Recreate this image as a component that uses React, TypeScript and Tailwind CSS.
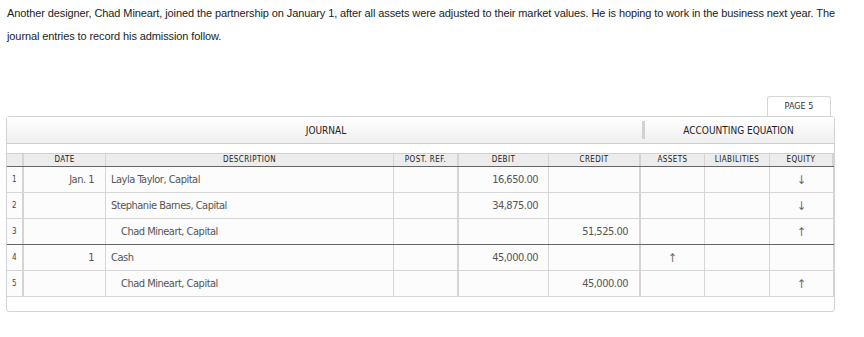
import React from "react";

const dataFont = { fontFamily: '"DejaVu Sans Condensed", "DejaVu Sans", sans-serif' };

type Row = {
  n: number;
  date: string;
  desc: string;
  indent?: boolean;
  debit?: string;
  credit?: string;
  assets?: string;
  liab?: string;
  equity?: string;
  dark?: boolean;
};

const rows: Row[] = [
  { n: 1, date: "Jan. 1", desc: "Layla Taylor, Capital", debit: "16,650.00", equity: "↓" },
  { n: 2, date: "", desc: "Stephanie Barnes, Capital", debit: "34,875.00", equity: "↓" },
  { n: 3, date: "", desc: "Chad Mineart, Capital", indent: true, credit: "51,525.00", equity: "↑", dark: true },
  { n: 4, date: "1", desc: "Cash", debit: "45,000.00", assets: "↑" },
  { n: 5, date: "", desc: "Chad Mineart, Capital", indent: true, credit: "45,000.00", equity: "↑" },
];

function HeadCell({ w, children, thick, last }: { w: string; children?: React.ReactNode; thick?: boolean; last?: boolean }) {
  return (
    <div
      className={`${w} shrink-0 flex items-center justify-center ${last ? "" : thick ? "border-r-2 border-[#d4d4d4]" : "border-r border-[#d4d4d4]"}`}
    >
      {children}
    </div>
  );
}

export default function App() {
  return (
    <div className="bg-white w-[864px] h-[337px] overflow-hidden pl-[6px] pt-[2px]">
      <p
        className="w-[842px] text-[11px] leading-[23px] text-[#222] pl-[1px] tracking-[-0.1px]"
        style={{ fontFamily: '"Liberation Sans", Arial, sans-serif' }}
      >
        Another designer, Chad Mineart, joined the partnership on January 1, after all assets were adjusted to their market values. He is hoping to work in the business next year. The journal entries to record his admission follow.
      </p>

      <div className="w-[829px] mt-[48px]" style={{ fontFamily: '"DejaVu Sans Condensed", "DejaVu Sans", sans-serif' }}>
        <div className="flex justify-end pr-[4px]">
          <div className="w-[64px] h-[20px] border border-b-0 border-[#d6d6d6] rounded-t-[3px] bg-white flex items-center justify-center text-[9px] text-[#333]">
            PAGE 5
          </div>
        </div>

        <div className="border border-[#d3d3d3] rounded-[3px] bg-white">
          {/* Header band */}
          <div className="h-[27px] flex bg-gradient-to-b from-white to-[#efefef] border-b border-[#cfcfcf] text-[10px] text-[#222]">
            <div className="w-[635px] flex items-center justify-center pl-[3px]">JOURNAL</div>
            <div className="w-[3px] my-[4px] bg-[#d2d2d2]" />
            <div className="flex-1 flex items-center justify-center pr-[2px]">ACCOUNTING EQUATION</div>
          </div>

          <div className="h-[9px]" />

          {/* Column header row */}
          <div className="h-[14px] flex border-t border-[#d0d0d0] border-b border-b-[#666] bg-[#ececec] text-[8px] tracking-[0.4px] text-[#222]">
            <HeadCell w="w-[17px]" thick />
            <HeadCell w="w-[82px]">DATE</HeadCell>
            <HeadCell w="w-[288px]">DESCRIPTION</HeadCell>
            <HeadCell w="w-[65px]" thick>POST. REF.</HeadCell>
            <HeadCell w="w-[90px]">DEBIT</HeadCell>
            <HeadCell w="w-[92px]" thick>CREDIT</HeadCell>
            <HeadCell w="w-[64px]">ASSETS</HeadCell>
            <HeadCell w="w-[65px]">LIABILITIES</HeadCell>
            <HeadCell w="w-[63px]">EQUITY</HeadCell>
            <div className="w-[2px] bg-[#d4d4d4]" />
          </div>

          {rows.map((r) => (
            <div
              key={r.n}
              className={`h-[26px] flex bg-[#fcfcfc] border-b ${r.dark ? "border-[#666]" : "border-[#d6d6d6]"} text-[11px] tracking-[-0.5px] text-[#555]`}
              style={dataFont}
            >
              <div className="w-[17px] shrink-0 border-r-2 border-[#d4d4d4] flex items-center pl-[5px] text-[8px] tracking-normal text-[#444]">
                {r.n}
              </div>
              <div className="w-[82px] shrink-0 border-r border-[#d6d6d6] flex items-center justify-end pr-[11px] pt-[2px]">{r.date}</div>
              <div className={`w-[288px] shrink-0 border-r border-[#d6d6d6] flex items-center pt-[2px] ${r.indent ? "pl-[15px]" : "pl-[5px]"}`}>{r.desc}</div>
              <div className="w-[65px] shrink-0 border-r-2 border-[#d4d4d4]" />
              <div className="w-[90px] shrink-0 border-r border-[#d6d6d6] flex items-center justify-end pr-[10px] pt-[2px]">{r.debit}</div>
              <div className="w-[92px] shrink-0 border-r-2 border-[#d4d4d4] flex items-center justify-end pr-[11px] pt-[2px]">{r.credit}</div>
              <div className="w-[64px] shrink-0 border-r border-[#d6d6d6] flex items-center justify-center text-[#666] text-[12px] tracking-normal">{r.assets}</div>
              <div className="w-[65px] shrink-0 border-r border-[#d6d6d6]" />
              <div className="w-[63px] shrink-0 flex items-center justify-center text-[#666] text-[12px] tracking-normal">{r.equity}</div>
              <div className="w-[2px] bg-[#d4d4d4]" />
            </div>
          ))}

          <div className="h-[14px]" />
        </div>
      </div>
    </div>
  );
}
